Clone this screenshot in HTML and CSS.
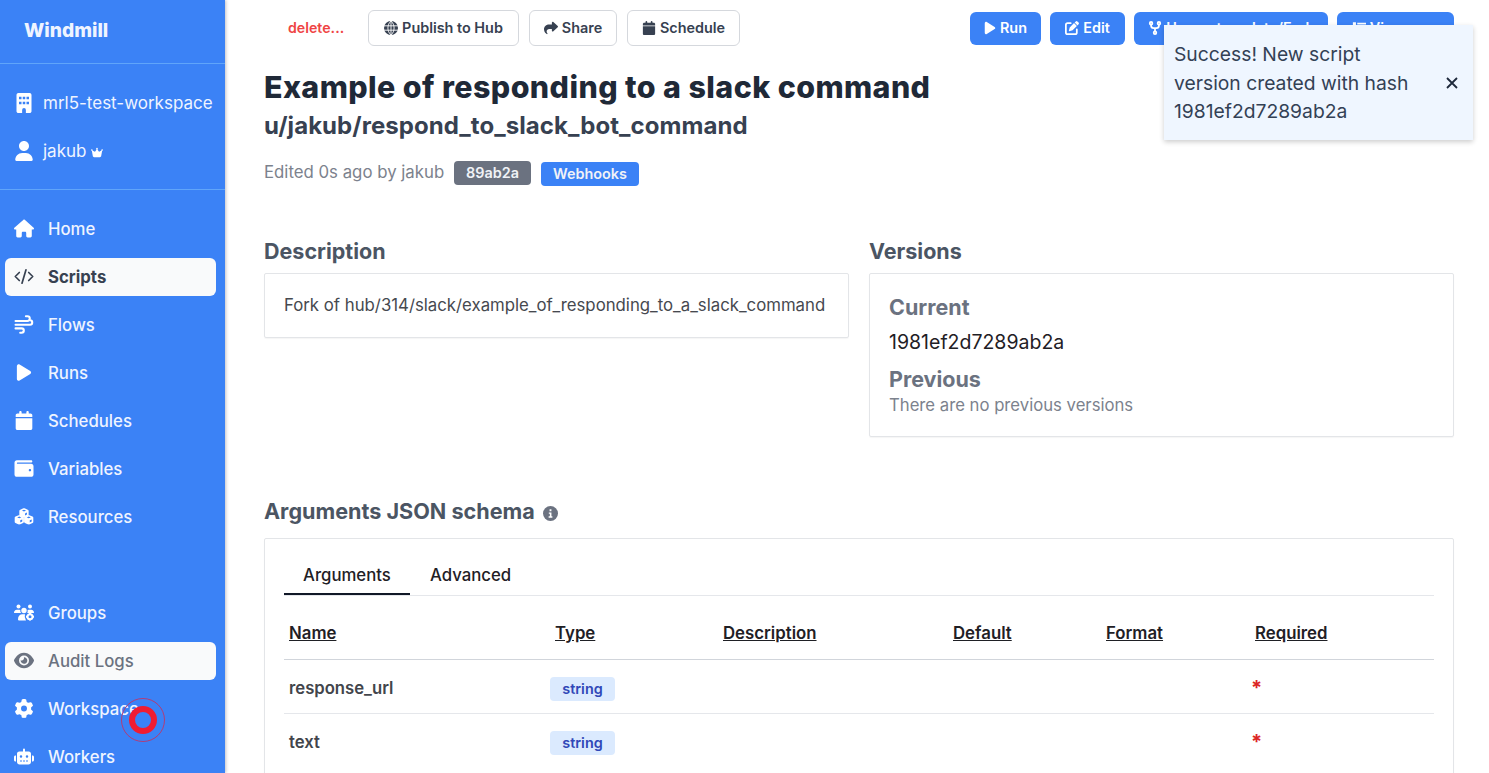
FILE: index.html
```html
<!DOCTYPE html>
<html lang="en">
<head>
<meta charset="utf-8">
<title>Windmill</title>
<link rel="stylesheet" href="styles.css">
</head>
<body>
<svg class="defs" aria-hidden="true">
  <symbol id="play" viewBox="0 0 384 512"><path d="M73 39c-14.8-9.1-33.4-9.4-48.5-.9S0 62.6 0 80V432c0 17.4 9.4 33.4 24.5 41.9s33.7 8.1 48.5-.9L361 297c14.3-8.7 23-24.2 23-41s-8.7-32.2-23-41L73 39z"/></symbol>
  <symbol id="calendar" viewBox="0 0 448 512"><path d="M96 32V64H48C21.5 64 0 85.5 0 112v48H448V112c0-26.5-21.5-48-48-48H352V32c0-17.7-14.3-32-32-32s-32 14.3-32 32V64H160V32c0-17.7-14.3-32-32-32S96 14.3 96 32zM448 192H0V464c0 26.5 21.5 48 48 48H400c26.5 0 48-21.5 48-48V192z"/></symbol>
  <symbol id="cube" viewBox="0 0 20 20"><path fill-rule="evenodd" d="M8.800 .7Q10 .1 11.200 .7L17.500 3.500Q19.500 4.200 19.500 5.800V14Q19.500 15.500 17.600 16.200L11.200 19.300Q10 19.900 8.800 19.300L2.400 16.200Q.5 15.500 .5 14V5.800Q.5 4.200 2.500 3.500zM10 3.500L5.800 5.200 10 7 14.200 5.200zM12 11V15.500L16 13.500V9.200z"/></symbol>
</svg>
<div class="app">
  <aside class="sidebar">
    <div class="brand">Windmill</div>
    <div class="account">
      <a class="nav-item account-item"><svg class="icon" viewBox="0 0 384 512"><path fill-rule="evenodd" d="M48 0C21.500 0 0 21.500 0 48V464c0 26.500 21.500 48 48 48h96V432a48 48 0 0 1 96 0v80h96c26.500 0 48-21.500 48-48V48c0-26.500-21.500-48-48-48zM64 96h64v64H64zM160 96h64v64h-64zM256 96h64v64h-64zM64 224h64v64H64zM160 224h64v64h-64zM256 224h64v64h-64z"/></svg>mrl5-test-workspace</a>
      <a class="nav-item account-item"><svg class="icon" viewBox="0 0 448 512"><path d="M224 256c70.700 0 128-57.300 128-128S294.700 0 224 0S96 57.300 96 128s57.300 128 128 128zm-45.700 48C79.800 304 0 383.800 0 482.300C0 498.700 13.300 512 29.700 512H418.300c16.400 0 29.700-13.300 29.700-29.700C448 383.800 368.200 304 269.700 304H178.300z"/></svg>jakub<svg class="crown" viewBox="0 0 576 512"><path d="M309 106c12-7 19-20 19-34a40 40 0 1 0-80 0c0 14 8 27 19 34l-57 94c-9 18-33 24-49 11L72 160c5-7 8-15 8-24a40 40 0 1 0-40 40h1l46 252c5 30 31 52 63 52H426c31 0 57-22 63-52l46-252h1a40 40 0 1 0-40-40c0 9 3 17 8 24l-89 51c-16 13-40 7-49-11z"/></svg></a>
    </div>
    <nav class="nav">
      <a class="nav-item"><svg class="icon" viewBox="0 0 576 512"><path d="M575.8 255.5c0 18-15 32.1-32 32.1h-32l.7 160.2c0 2.7-.2 5.4-.5 8.1V472c0 22.1-17.9 40-40 40H392c-22.1 0-40-17.900-40-40V384c0-17.700-14.300-32-32-32H256c-17.700 0-32 14.300-32 32v88c0 22.100-17.900 40-40 40H104c-22.100 0-40-17.900-40-40V287.600H32c-18 0-32-14-32-32.100c0-9 3-17 10-24L266.400 8c7-7 15-8 22-8s15 2 21 7L564.800 231.500c8 7 12 15 11 24z"/></svg>Home</a>
      <a class="nav-item selected"><svg class="icon line" viewBox="0 0 20 16"><path d="M5.300 4L1.300 8l4 4M14.700 4l4 4-4 4M12 1.300L8 14.700"/></svg>Scripts</a>
      <a class="nav-item"><svg class="icon line wind" viewBox="0 0 20 20"><path d="M12 1.300h1.600a2.500 2.500 0 0 1 0 5H1.100M15.500 5.600h.8a2.300 2.300 0 0 1 0 4.700H1.100M6 18.700h1.500a2.300 2.300 0 0 0 0-4.600H1.100"/></svg>Flows</a>
      <a class="nav-item"><svg class="icon"><use href="#play"/></svg>Runs</a>
      <a class="nav-item"><svg class="icon"><use href="#calendar"/></svg>Schedules</a>
      <a class="nav-item"><svg class="icon" viewBox="0 0 512 512"><path d="M64 32C28.700 32 0 60.700 0 96V416c0 35.300 28.700 64 64 64H448c35.300 0 64-28.700 64-64V192c0-35.300-28.700-64-64-64H80c-8.800 0-16-7.200-16-16s7.200-16 16-16H448c17.700 0 32-14.300 32-32s-14.300-32-32-32H64zM416 336c-17.700 0-32-14.300-32-32s14.300-32 32-32s32 14.300 32 32s-14.300 32-32 32z"/></svg>Variables</a>
      <a class="nav-item"><svg class="icon" viewBox="0 0 20 20"><use href="#cube" x="4.800" y="1" width="10.400" height="10.400"/><use href="#cube" x="-.2" y="8.300" width="10.400" height="10.400"/><use href="#cube" x="9.800" y="8.300" width="10.400" height="10.400"/></svg>Resources</a>
    </nav>
    <nav class="nav nav-admin">
      <a class="nav-item"><svg class="icon" viewBox="0 0 20 16"><circle cx="4.500" cy="2" r="2"/><circle cx="16" cy="2" r="2"/><circle cx="10" cy="6" r="2.700"/><path d="M0 8.400Q.1 5.400 2.800 5.200H5.200L6.300 5.600Q6 7.700 7.200 8.600H.7zM13.600 5.500L15 5.200H17.200Q19.900 5.400 20 8.400H13.200Q13.900 7.500 13.600 5.500zM4 15.200Q3.900 10.200 8 9.700H11Q10 12.500 12 15.900H4.700z"/><circle cx="16" cy="12.200" r="2.500" fill="none" stroke="currentColor" stroke-width="2"/><path d="M15 8.500h2v2h-2zM15 14h2v2h-2zM12 11.200h2v2h-2zM18 11.200h2v2h-2z"/></svg>Groups</a>
      <a class="nav-item hovered"><svg class="icon" viewBox="0 0 576 512"><path fill-rule="evenodd" d="M288 32c-80.800 0-145.500 36.800-192.600 80.600C48.600 156 17.300 208 2.500 243.700c-3.300 7.900-3.300 16.700 0 24.600C17.300 304 48.600 356 95.400 399.400C142.500 443.200 207.200 480 288 480s145.500-36.800 192.600-80.600c46.800-43.500 78.100-95.400 93-131.100c3.300-7.900 3.300-16.700 0-24.600c-14.900-35.700-46.200-87.700-93-131.100C433.500 68.800 368.800 32 288 32zM144 256a144 144 0 1 1 288 0 144 144 0 1 1 -288 0z"/><path d="M288 192c0 35.300-28.700 64-64 64c-7.100 0-13.900-1.200-20.300-3.300c-5.500-1.800-11.900 1.600-11.700 7.400c.3 6.900 1.300 13.800 3.200 20.700c13.700 51.200 66.400 81.600 117.600 67.900s81.600-66.400 67.900-117.600c-11.100-41.500-47.800-69.400-88.600-71.100c-5.800-.2-9.200 6.100-7.400 11.700c2.100 6.400 3.300 13.200 3.300 20.300z"/></svg>Audit Logs</a>
      <a class="nav-item"><svg class="icon" viewBox="0 0 512 512"><path fill-rule="evenodd" d="M495.9 166.6c3.2 8.7 .5 18.4-6.4 24.6l-43.3 39.4c1.1 8.3 1.7 16.8 1.7 25.4s-.6 17.1-1.7 25.4l43.3 39.4c6.9 6.2 9.6 15.9 6.4 24.6c-4.4 11.9-9.7 23.3-15.8 34.3l-4.7 8.1c-6.6 11-14 21.4-22.1 31.2c-5.9 7.2-15.7 9.6-24.5 6.8l-55.7-17.7c-13.4 10.3-28.2 18.9-44 25.4l-12.5 57.1c-2 9.1-9 16.3-18.2 17.8c-13.8 2.300-28 3.500-42.500 3.500s-28.700-1.200-42.500-3.500c-9.200-1.500-16.200-8.700-18.200-17.800l-12.500-57.100c-15.800-6.500-30.600-15.100-44-25.400L83.100 425.900c-8.800 2.800-18.600 .3-24.500-6.800c-8.100-9.800-15.500-20.200-22.100-31.200l-4.700-8.100c-6.100-11-11.400-22.400-15.800-34.300c-3.200-8.700-.5-18.400 6.400-24.600l43.300-39.400C64.600 273.100 64 264.600 64 256s.6-17.100 1.700-25.400L22.400 191.200c-6.900-6.200-9.600-15.900-6.400-24.600c4.400-11.900 9.700-23.300 15.800-34.300l4.700-8.100c6.600-11 14-21.400 22.100-31.200c5.900-7.200 15.700-9.600 24.500-6.800l55.700 17.700c13.400-10.300 28.200-18.900 44-25.400l12.500-57.100c2-9.100 9-16.300 18.200-17.800C227.300 1.200 241.500 0 256 0s28.700 1.200 42.500 3.500c9.200 1.500 16.200 8.700 18.200 17.800l12.500 57.100c15.800 6.500 30.600 15.100 44 25.400l55.700-17.700c8.800-2.800 18.600-.3 24.500 6.800c8.100 9.800 15.500 20.200 22.100 31.200l4.700 8.100c6.100 11 11.400 22.400 15.800 34.300zM256 336a80 80 0 1 0 0-160 80 80 0 1 0 0 160z"/></svg>Workspace</a>
      <a class="nav-item"><svg class="icon" viewBox="0 0 640 512"><path fill-rule="evenodd" d="M288 32a32 32 0 0 1 64 0V96H472c40 0 72 32 72 72V432c0 44-36 80-80 80H176c-44 0-80-36-80-80V168c0-40 32-72 72-72H288zM184 256a40 40 0 1 0 80 0 40 40 0 1 0-80 0M376 256a40 40 0 1 0 80 0 40 40 0 1 0-80 0M192 384v32h64v-32zM288 384v32h64v-32zM384 384v32h64v-32zM64 224v192H48c-27 0-48-21-48-48v-96c0-27 21-48 48-48zM576 224h16c27 0 48 21 48 48v96c0 27-21 48-48 48h-16z"/></svg>Workers</a>
    </nav>
  </aside>

  <main class="main">
    <div class="toolbar">
      <a class="delete">delete...</a>
      <button class="btn publish"><svg viewBox="0 0 16 16" class="globe"><circle cx="8" cy="8" r="8"/><path d="M0 5.500H16M0 10.500H16M8 0V16M8 0C3.300 4 3.300 12 8 16M8 0C12.700 4 12.700 12 8 16"/></svg>Publish to Hub</button>
      <button class="btn share"><svg viewBox="0 0 512 512"><path d="M307 34.800c-11.500 5.100-19 16.600-19 29.200v64H176C78.800 128 0 206.800 0 304C0 417.300 81.500 467.900 100.200 478.100c2.500 1.400 5.300 1.900 8.100 1.900c10.900 0 19.700-8.900 19.700-19.700c0-7.500-4.300-14.400-9.800-19.500C108.800 431.900 96 414.400 96 384c0-53 43-96 96-96h96v64c0 12.600 7.400 24.100 19 29.200s25 3 34.400-5.400l160-144c6.700-6.100 10.600-14.700 10.600-23.800s-3.800-17.700-10.600-23.800l-160-144c-9.400-8.500-22.900-10.600-34.400-5.400z"/></svg>Share</button>
      <button class="btn schedule"><svg><use href="#calendar"/></svg>Schedule</button>
      <div class="actions">
        <button class="btn primary run"><svg><use href="#play"/></svg>Run</button>
        <button class="btn primary edit"><svg viewBox="0 0 16 16"><path d="M6.500 2.500H3Q1 2.500 1 4.500V13Q1 15 3 15H11.500Q13.500 15 13.500 13V9.500" fill="none" stroke="currentColor" stroke-width="2" stroke-linecap="round"/><path d="M11 1.700L12.300 .5Q13.200-.3 14.200 .5L15.500 1.800Q16.300 2.700 15.500 3.700L14.300 5zM10.300 2.400L13.600 5.700 8.700 10.600 4.800 11.600Q4.300 11.500 4.400 11.100L5.400 7.300z"/></svg>Edit</button>
        <button class="btn primary fork"><svg viewBox="0 0 14 16"><g fill="none" stroke="currentColor" stroke-width="2"><circle cx="2.500" cy="2.600" r="1.500"/><circle cx="11.500" cy="2.600" r="1.500"/><circle cx="7" cy="13.400" r="1.500"/><path d="M2.500 4V5Q2.500 8 5.500 8H8.500Q11.500 8 11.500 5V4M7 8V12"/></g></svg>Use as template/Fork</button>
        <button class="btn primary view"><svg viewBox="0 0 16 16"><path d="M1 1.500H4.500V5H1zM6 2H16V4H6zM1 6.500H4.500V9.500H1zM6 7H16V9H6zM1 11.500H4.500V15H1zM6 12H16V14H6z"/></svg>View runs</button>
      </div>
    </div>

    <h1>Example of responding to a slack command</h1>
    <h2>u/jakub/respond_to_slack_bot_command</h2>
    <div class="meta"><span class="edited">Edited 0s ago by jakub</span><span class="tag hash">89ab2a</span><span class="tag hooks">Webhooks</span></div>

    <div class="columns">
      <section>
        <h3>Description</h3>
        <div class="box description">Fork of hub/314/slack/example_of_responding_to_a_slack_command</div>
      </section>
      <section>
        <h3>Versions</h3>
        <div class="box versions">
          <h4>Current</h4>
          <p class="current">1981ef2d7289ab2a</p>
          <h4>Previous</h4>
          <p class="none">There are no previous versions</p>
        </div>
      </section>
    </div>

    <section class="schema">
      <h3 class="schema-title">Arguments JSON schema<svg class="info" viewBox="0 0 16 16"><circle cx="8" cy="8" r="8"/><path d="M7 3.500H9V5.500H7zM6.200 7H9V11H10V12.500H6V11H7.300V8.400H6.200z" fill="#fff"/></svg></h3>
      <div class="box schema-box">
        <div class="tabs"><a class="tab active">Arguments</a><a class="tab">Advanced</a></div>
        <div class="table">
          <div class="row head"><span>Name</span><span>Type</span><span>Description</span><span>Default</span><span>Format</span><span>Required</span></div>
          <div class="row"><span>response_url</span><span><b class="type">string</b></span><span></span><span></span><span></span><span class="required">*</span></div>
          <div class="row"><span>text</span><span><b class="type">string</b></span><span></span><span></span><span></span><span class="required">*</span></div>
        </div>
      </div>
    </section>
  </main>
</div>
<div class="toast"><p>Success! New script<br>version created with hash<br>1981ef2d7289ab2a</p><svg viewBox="0 0 12 12"><path d="M1 1L11 11M11 1L1 11"/></svg></div>
<div class="pointer"></div>
</body>
</html>
```
FILE: styles.css
```css
* { box-sizing: border-box; }
body {
  margin: 0;
  height: 773px;
  overflow: hidden;
  background: #fff;
  color: #1f2025;
  font-family: Inter, "Liberation Sans", sans-serif;
  white-space: nowrap;
}
h1, h2, h3, h4, p { margin: 0; }
svg { fill: currentColor; flex: none; }
.defs { position: absolute; width: 0; height: 0; }
.app { display: flex; height: 773px; overflow: hidden; }

.sidebar {
  width: 225px;
  flex: none;
  background: #3b82f6;
  color: #eff4ff;
  box-shadow: 1px 0 3px rgba(60, 50, 60, .3);
}
.brand {
  height: 64px;
  padding-left: 24px;
  border-bottom: 1px solid #60a5fa;
  font-size: 19.2px;
  font-weight: 800;
  line-height: 60px;
}
.account { height: 126px; padding-top: 20px; border-bottom: 1px solid #60a5fa; }
.nav { padding: 20px 9px 0 5px; }
.nav-admin { padding-top: 48px; }
.nav-item {
  display: flex;
  align-items: center;
  height: 38px;
  margin-bottom: 10px;
  padding: 0 0 1px 9px;
  border-radius: 6px;
  font-size: 16.75px;
  font-weight: 500;
}
.account-item { padding-left: 14px; font-size: 17px; font-weight: 400; }
.nav-item .icon { width: 20px; height: 19px; margin-right: 14px; color: #fff; }
.account-item .icon { margin-right: 9px; height: 20px; }
.nav-item .crown { width: 12px; height: 11px; margin: 3px 0 0 5px; color: #fff; }
.nav-item .line { fill: none; stroke: currentColor; stroke-width: 1.7; stroke-linecap: round; stroke-linejoin: round; }
.nav-item .wind { stroke-width: 2.2; }
.nav-item.selected { background: #f9fafb; color: #374151; font-weight: 650; }
.nav-item.hovered { background: #f9fafb; color: #6b7280; }
.selected .icon.icon { color: #374151; }
.hovered .icon.icon { color: #6b7280; }

.main { flex: 1; min-width: 0; padding: 10px 35px 0 39px; }
.toolbar { display: flex; align-items: center; height: 36px; }
.delete { width: 104px; padding-left: 24px; color: #ef4444; font-size: 14.2px; font-weight: 600; line-height: 18px; }
.btn {
  display: flex;
  align-items: center;
  justify-content: center;
  gap: 4px;
  height: 36px;
  margin: 0 10px 0 0;
  padding: 0 0 1px;
  border: 1px solid #d5d8dd;
  border-radius: 6px;
  background: #fff;
  color: #374151;
  font: 600 14.4px Inter, sans-serif;
}
.btn svg { width: 14px; height: 14px; }
.publish { width: 151px; }
.share { width: 88px; }
.schedule { width: 113px; }
.globe path { fill: none; stroke: #fff; stroke-width: 1; }
.actions { display: flex; gap: 9px; margin-left: auto; }
.primary { height: 33px; margin: 0; border: 0; background: #3b82f6; color: #fff; }
.primary.run { width: 71px; }
.btn.run svg { width: 12px; }
.edit { width: 75px; }
.fork { width: 194px; }
.view { width: 117px; }

h1 { margin-top: 22px; color: #1f2937; font-size: 30.4px; font-weight: 800; line-height: 38px; letter-spacing: .42px; }
h2 { margin-top: 4px; color: #374151; font-size: 24px; font-weight: 650; line-height: 32px; letter-spacing: .06px; }
.meta { display: flex; height: 26px; margin-top: 19px; align-items: flex-start; }
.edited { width: 190px; color: #7c828d; font-size: 16.8px; line-height: 22px; }
.tag { height: 24px; border-radius: 4px; font-size: 14.4px; font-weight: 500; line-height: 24px; text-align: center; color: #f0f2f7; }
.hash { width: 77px; background: #6b7280; font-weight: 600; }
.hooks { width: 98px; margin: 1px 0 0 10px; background: #3b82f6; font-weight: 600; }

.columns { display: grid; grid-template-columns: 1fr 1fr; gap: 20px; align-items: start; height: 260px; margin-top: 49px; }
h3 { color: #4b5563; font-size: 21.5px; font-weight: 700; line-height: 30px; }
.box { margin-top: 7px; border: 1px solid #e3e5e8; border-radius: 2px; padding: 19px; box-shadow: 0 1px 1px rgba(0, 0, 0, .04); }
.description { height: 65px; color: #46494f; font-size: 16.78px; line-height: 25px; }
.versions { height: 164px; }
h4 { color: #6b7280; font-size: 21.5px; font-weight: 700; line-height: 29px; }
.current { height: 43px; padding-top: 6px; font-size: 19.5px; line-height: 29px; }
.none { color: #7c828d; font-size: 16.7px; line-height: 22px; }
.schema-title { font-size: 21.6px; }
.info { width: 15px; height: 15px; margin-left: 8px; vertical-align: -2px; color: #6b7280; }
.schema-box { margin-top: 12px; height: 300px; }
.tabs { display: flex; height: 38px; border-bottom: 1px solid #e5e7eb; }
.tab { height: 37px; padding: 0 20px; font-size: 16.75px; font-weight: 500; line-height: 35px; }
.active { width: 126px; padding: 0 0 0 19px; border-bottom: 2px solid #111827; }
.row {
  display: grid;
  grid-template-columns: 266px 168px 230px 153px 149px 1fr;
  align-items: center;
  height: 54px;
  padding: 2px 0 0 5px;
  border-bottom: 1px solid #e5e7eb;
  color: #42454b;
  font-size: 16.7px;
  font-weight: 600;
}
.row:last-child { border-bottom-color: transparent; }
.head { height: 64px; padding-top: 10px; border-bottom-color: #d1d5db; color: #1f2025; font-size: 16.8px; text-decoration: underline; }
.type { display: block; width: 65px; height: 24px; margin: 2px 0 0 -5px; border-radius: 4px; background: #dbeafe; color: #3048b8; font-size: 14.4px; font-weight: 600; line-height: 24px; text-align: center; }
.required { margin: 0 0 0 -4px; color: #dc2626; font-size: 20px; font-weight: 700; }

.toast {
  position: absolute;
  left: 1164px;
  top: 25px;
  display: flex;
  align-items: center;
  justify-content: space-between;
  width: 309px;
  height: 115px;
  padding: 1px 15px 0 10px;
  background: #eff6ff;
  color: #334155;
  box-shadow: 0 2px 5px rgba(0, 0, 0, .2);
  font-size: 19.3px;
  line-height: 28.8px;
}
.toast svg { width: 12px; height: 12px; fill: none; stroke: #1e293b; stroke-width: 1.8; }
.pointer {
  position: absolute;
  left: 129px;
  top: 706px;
  width: 28px;
  height: 28px;
  border: 6px solid #f01c32;
  border-radius: 50%;
  outline: 1px solid #b13c78;
  outline-offset: 7px;
}
```
